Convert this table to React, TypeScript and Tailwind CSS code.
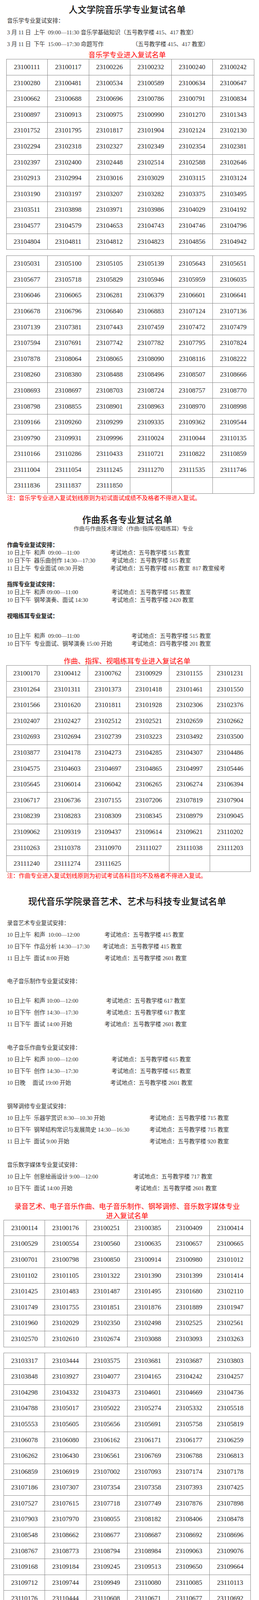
const t1a = [
  '23100111', '23100117', '23100226', '23100232', '23100240', '23100242',
  '23100280', '23100481', '23100534', '23100589', '23100634', '23100647',
  '23100662', '23100688', '23100696', '23100786', '23100791', '23100834',
  '23100897', '23100913', '23100975', '23100990', '23101270', '23101343',
  '23101752', '23101795', '23101817', '23101904', '23102124', '23102130',
  '23102294', '23102318', '23102327', '23102349', '23102354', '23102381',
  '23102397', '23102400', '23102448', '23102514', '23102588', '23102646',
  '23102913', '23102994', '23103016', '23103029', '23103115', '23103124',
  '23103190', '23103197', '23103207', '23103282', '23103375', '23103495',
  '23103511', '23103898', '23103971', '23103986', '23104029', '23104192',
  '23104577', '23104579', '23104653', '23104743', '23104746', '23104796',
  '23104804', '23104811', '23104812', '23104823', '23104856', '23104942',
];

const t1b = [
  '23105031', '23105100', '23105105', '23105139', '23105643', '23105651',
  '23105677', '23105718', '23105829', '23105946', '23105959', '23106035',
  '23106046', '23106065', '23106281', '23106379', '23106601', '23106641',
  '23106678', '23106796', '23106840', '23106883', '23107124', '23107136',
  '23107139', '23107381', '23107443', '23107459', '23107472', '23107479',
  '23107594', '23107691', '23107742', '23107782', '23107795', '23107824',
  '23107878', '23108064', '23108065', '23108090', '23108116', '23108222',
  '23108260', '23108380', '23108488', '23108496', '23108507', '23108666',
  '23108693', '23108697', '23108703', '23108724', '23108757', '23108770',
  '23108798', '23108855', '23108901', '23108963', '23108970', '23108998',
  '23109166', '23109260', '23109299', '23109335', '23109362', '23109544',
  '23109790', '23109931', '23109996', '23110024', '23110044', '23110135',
  '23110166', '23110286', '23110433', '23110721', '23110822', '23110859',
  '23111004', '23111054', '23111245', '23111270', '23111535', '23111746',
  '23111836', '23111837', '23111850',
];

const t2 = [
  '23100170', '23100412', '23100762', '23100929', '23101155', '23101231',
  '23101264', '23101311', '23101373', '23101418', '23101461', '23101550',
  '23101566', '23101620', '23101811', '23101928', '23102306', '23102376',
  '23102407', '23102427', '23102512', '23102521', '23102659', '23102662',
  '23102693', '23102694', '23102739', '23103223', '23103492', '23103500',
  '23103877', '23104178', '23104273', '23104285', '23104307', '23104486',
  '23104575', '23104603', '23104697', '23104865', '23104997', '23105446',
  '23105645', '23106014', '23106042', '23106265', '23106274', '23106394',
  '23106717', '23106736', '23107155', '23107206', '23107819', '23107904',
  '23108239', '23108283', '23108309', '23108345', '23108979', '23109045',
  '23109062', '23109319', '23109437', '23109614', '23109621', '23110202',
  '23110263', '23110378', '23110970', '23111027', '23111038', '23111203',
  '23111240', '23111274', '23111625',
];

const t3a = [
  '23100114', '23100176', '23100251', '23100385', '23100409', '23100414',
  '23100529', '23100554', '23100560', '23100635', '23100657', '23100665',
  '23100701', '23100798', '23100850', '23100914', '23100980', '23101012',
  '23101102', '23101105', '23101322', '23101390', '23101399', '23101414',
  '23101425', '23101483', '23101487', '23101495', '23101680', '23102110',
  '23101749', '23101755', '23101851', '23101876', '23101889', '23101947',
  '23101960', '23102029', '23102350', '23102498', '23102525', '23102561',
  '23102570', '23102610', '23102674', '23103088', '23103093', '23103263',
];

const t3b = [
  '23103317', '23103444', '23103575', '23103681', '23103687', '23103803',
  '23103848', '23103927', '23104077', '23104165', '23104242', '23104257',
  '23104298', '23104332', '23104373', '23104601', '23104669', '23104736',
  '23104788', '23105017', '23105022', '23105274', '23105332', '23105518',
  '23105553', '23105605', '23105656', '23105691', '23105758', '23105819',
  '23106078', '23106080', '23106162', '23106171', '23106177', '23106259',
  '23106262', '23106430', '23106561', '23106769', '23106788', '23106813',
  '23106859', '23106919', '23107002', '23107093', '23107174', '23107178',
  '23107186', '23107307', '23107354', '23107358', '23107393', '23107425',
  '23107527', '23107615', '23107718', '23107749', '23107876', '23107898',
  '23107903', '23107970', '23108055', '23108182', '23108406', '23108478',
  '23108548', '23108662', '23108677', '23108687', '23108692', '23108696',
  '23108767', '23108773', '23108794', '23108984', '23109063', '23109076',
  '23109168', '23109184', '23109245', '23109513', '23109650', '23109664',
  '23109712', '23109744', '23109949', '23110080', '23110085', '23110113',
  '23110176', '23110444', '23110608', '23110671', '23110677', '23110692',
  '23110794', '23110927', '23111059', '23111112', '23111217', '23111395',
  '23111761', '23111900',
];

const NumGrid = ({ ids, className }: { ids: string[]; className: string }) => {
  const cells = [...ids];
  while (cells.length % 6) cells.push('');
  return (
    <div className={`grid grid-cols-6 border-t border-l border-[#858585] ${className}`}>
      {cells.map((id, i) => (
        <div
          key={i}
          className="h-[40.6px] flex items-center justify-center border-r border-b border-[#858585] text-[17px] text-[#262626] font-['Liberation_Serif',serif]"
        >
          {id}
        </div>
      ))}
    </div>
  );
};

// 左边是时间/科目，右边是考试地点
const Row = ({ a, b, w, tall }: { a: string; b?: string; w?: string; tall?: boolean }) => (
  <div className={`flex whitespace-pre ${tall ? 'h-[30px] leading-[30px]' : 'h-[20px] leading-[20px]'}`}>
    <span className={`shrink-0 ${w ?? ''}`}>{a}</span>
    {b && <span>{b}</span>}
  </div>
);

const Title = ({ children, className }: { children: React.ReactNode; className: string }) => (
  <h1 className={`h-[30px] leading-[30px] text-[23px] font-medium text-[#111] text-center font-['Noto_Sans_CJK_SC',sans-serif] ${className}`}>
    {children}
  </h1>
);

const RedHead = ({ children, className }: { children: React.ReactNode; className: string }) => (
  <h2 className={`leading-[23px] text-[18px] text-[#ff0000] text-center font-['Noto_Sans_CJK_SC',sans-serif] ${className}`}>
    {children}
  </h2>
);

export default function App() {
  return (
    <div className="w-[662px] bg-white pt-[8px] pb-[7px] text-[14.5px] text-[#333] font-['Liberation_Serif','Noto_Sans_CJK_SC',serif]">
      <div className="w-[650px]">
        {/* 人文学院 */}
        <Title className="">人文学院音乐学专业复试名单</Title>
        <div className="pl-[18px]">
          <Row tall a="音乐学专业复试安排：" />
          <Row tall a="3 月 11 日  上午  09:00—11:30 音乐学基础知识（五号教学楼 415、417 教室）" />
          <Row tall a="3 月 11 日  下午  15:00—17:30 命题写作" b="（五号教学楼 415、417 教室）" w="w-[320px]" />
        </div>
        <RedHead className="h-[23px]">音乐学专业进入复试名单</RedHead>
        <NumGrid ids={t1a} className="ml-[15.6px] w-[634px]" />
        <NumGrid ids={t1b} className="ml-[15.6px] w-[634px] mt-[15px]" />
        <p className="pl-[18px] h-[20px] leading-[20px] mt-[1px] text-[15px] text-[#ff0000]">
          注：音乐学专业进入复试划线原则为初试面试成绩不及格者不得进入复试。
        </p>

        {/* 作曲系 */}
        <Title className="mt-[29px]">作曲系各专业复试名单</Title>
        <p className="h-[20px] leading-[20px] text-center pl-[32px] text-[14px] text-[#444]">
          作曲与作曲技术理论（作曲//指挥/视唱练耳）专业
        </p>
        <div className="pl-[18px]">
          <div className="mt-[21px] h-[20px] leading-[20px] font-bold text-[#222]">作曲专业复试安排：</div>
          <Row a="10 日上午  和声  09:00—11:00" b="考试地点：五号教学楼 515 教室" w="w-[264px]" />
          <Row a="10 日下午  器乐曲创作 14:30—17:30" b="考试地点：五号教学楼 515 教室" w="w-[267px]" />
          <Row a="11 日上午  专业面试 08:30 开始" b="考试地点：五号教学楼 815 教室  817 教室候考" w="w-[264px]" />
          <div className="mt-[21px] h-[20px] leading-[20px] font-bold text-[#222]">指挥专业复试安排：</div>
          <Row a="10 日上午  和声 09:00—11:00" b="考试地点：五号教学楼 515 教室" w="w-[267px]" />
          <Row a="10 日下午  钢琴演奏、面试 14:30" b="考试地点：五号教学楼 2420 教室" w="w-[267px]" />
          <div className="mt-[21px] h-[20px] leading-[20px] font-bold text-[#222]">视唱练耳专业复试：</div>
          <div className="mt-[31px]">
            <Row a="10 日上午  和声  09:00—11:00" b="考试地点：五号教学楼 515 教室" w="w-[318px]" />
            <Row a="10 日下午  专业面试、钢琴演奏 15:00 开始" b="考试地点：四号教学楼 201 教室" w="w-[318px]" />
          </div>
        </div>
        <RedHead className="h-[23px] mt-[22px]">作曲、指挥、视唱练耳专业进入复试名单</RedHead>
        <NumGrid ids={t2} className="ml-[15.6px] w-[625px]" />
        <p className="pl-[18px] h-[20px] leading-[20px] text-[15px] text-[#ff0000]">
          注：作曲专业进入复试划线原则为初试考试各科目均不及格者不得进入复试。
        </p>

        {/* 现代音乐学院 */}
        <Title className="mt-[39px]">现代音乐学院录音艺术、艺术与科技专业复试名单</Title>
        <div className="pl-[18px]">
          <div className="mt-[27px]">
            <Row tall a="录音艺术专业复试安排：" />
            <Row tall a="10 日上午  和声  10:00—12:00" b="考试地点：五号教学楼 415 教室" w="w-[249px]" />
            <Row tall a="10 日下午  作品分析 14:30—17:30" b="考试地点：五号教学楼 415 教室" w="w-[244px]" />
            <Row tall a="11 日上午  面试 8:00 开始" b="考试地点：五号教学楼 2601 教室" w="w-[249px]" />
          </div>
          <div className="mt-[29px]">
            <div className="mb-[20px]">
              <Row tall a="电子音乐制作专业复试安排：" />
            </div>
            <Row tall a="10 日上午  和声 10:00—12:00" b="考试地点：五号教学楼 617 教室" w="w-[253px]" />
            <Row tall a="10 日下午  创作 14:30—17:30" b="考试地点：五号教学楼 617 教室" w="w-[253px]" />
            <Row tall a="11 日下午  面试 14:00 开始" b="考试地点：五号教学楼 2601 教室" w="w-[249px]" />
          </div>
          <div className="mt-[30px]">
            <Row tall a="电子音乐作曲专业复试安排：" />
            <Row tall a="10 日上午  和声 10:00—12:00" b="考试地点：五号教学楼 615 教室" w="w-[267px]" />
            <Row tall a="10 日下午  创作 14:30—17:30" b="考试地点：五号教学楼 615 教室" w="w-[267px]" />
            <Row tall a="10 日晚     面试 19:00 开始" b="考试地点：五号教学楼 2601 教室" w="w-[264px]" />
          </div>
          <div className="mt-[30px]">
            <Row tall a="钢琴调修专业复试安排：" />
            <Row tall a="10 日上午  乐器学赏识 8:30—10.30 开始" b="考试地点：五号教学楼 715 教室" w="w-[364px]" />
            <Row tall a="10 日下午  钢琴结构常识与发展简史 14:30—16:30" b="考试地点：五号教学楼 715 教室" w="w-[364px]" />
            <Row tall a="11 日上午  面试 9:00 开始" b="考试地点：五号教学楼 920 教室" w="w-[364px]" />
          </div>
          <div className="mt-[30px]">
            <Row tall a="音乐数字媒体专业复试安排：" />
            <Row tall a="10 日上午  创意绘画设计 9:00—12:00" b="考试地点：五号教学楼 717 教室" w="w-[322px]" />
            <Row tall a="10 日下午  面试 14:00 开始" b="考试地点：五号教学楼 2601 教室" w="w-[326px]" />
          </div>
        </div>
        <RedHead className="mt-[18px] leading-[24px]">
          录音艺术、电子音乐作曲、电子音乐制作、钢琴调修、音乐数字媒体专业
          <br />
          进入复试名单
        </RedHead>
        <NumGrid ids={t3a} className="ml-[9.3px] w-[632px]" />
        <NumGrid ids={t3b} className="ml-[9.3px] w-[632px] mt-[14px]" />
      </div>
    </div>
  );
}
